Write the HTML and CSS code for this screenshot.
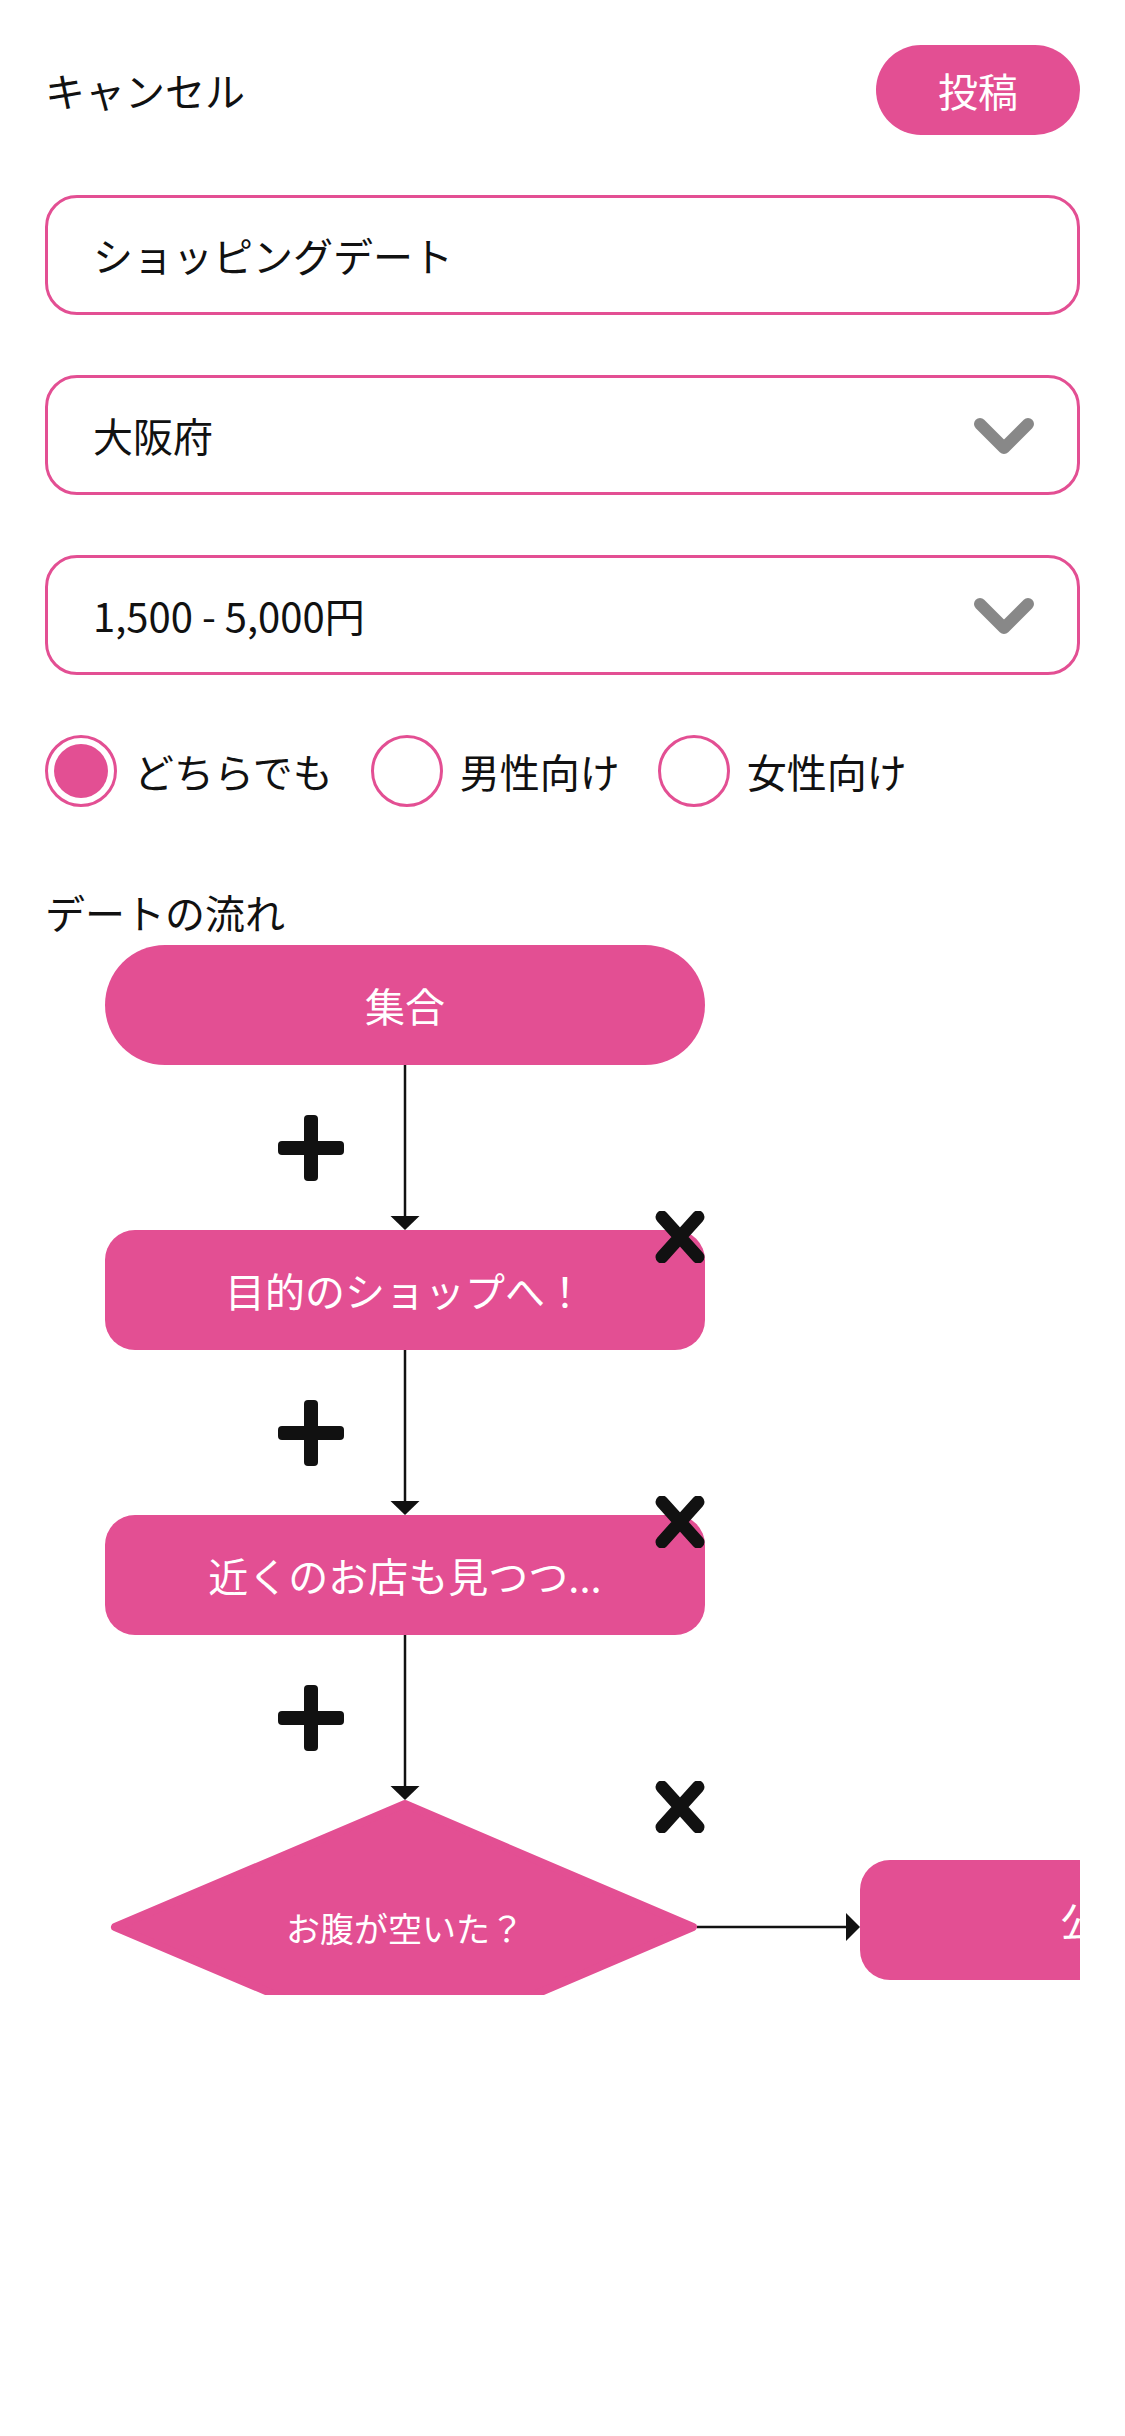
FILE: index.html
```html
<!DOCTYPE html>
<html lang="ja">
<head>
<meta charset="utf-8">
<title>投稿</title>
<link rel="stylesheet" href="styles.css">
</head>
<body>
<div class="page">
  <header class="topbar">
    <span class="cancel">キャンセル</span>
    <button class="post">投稿</button>
  </header>

  <div class="field"><span class="field-text">ショッピングデート</span></div>

  <div class="field select"><span class="field-text">大阪府</span>
    <svg class="chev" width="62" height="38" viewBox="0 0 62 38"><path d="M7 7 L31 31 L55 7" fill="none" stroke="#888" stroke-width="12" stroke-linecap="round" stroke-linejoin="round"/></svg>
  </div>

  <div class="field select"><span class="field-text">1,500 - 5,000円</span>
    <svg class="chev" width="62" height="38" viewBox="0 0 62 38"><path d="M7 7 L31 31 L55 7" fill="none" stroke="#888" stroke-width="12" stroke-linecap="round" stroke-linejoin="round"/></svg>
  </div>

  <div class="radios">
    <label class="radio"><span class="circle checked"><span class="dot"></span></span><span class="rlabel">どちらでも</span></label>
    <label class="radio"><span class="circle"></span><span class="rlabel">男性向け</span></label>
    <label class="radio"><span class="circle"></span><span class="rlabel">女性向け</span></label>
  </div>

  <div class="section-label">デートの流れ</div>

  <div class="flow">
    <svg class="wires" width="1200" height="1200" viewBox="0 0 1200 1200">
      <g stroke="#111" stroke-width="2.5" fill="none">
        <line x1="360" y1="120" x2="360" y2="275"/>
        <line x1="360" y1="405" x2="360" y2="560"/>
        <line x1="360" y1="690" x2="360" y2="845"/>
        <line x1="652" y1="982" x2="803" y2="982"/>
      </g>
      <g fill="#111">
        <polygon points="345.5,271 374.5,271 360,285"/>
        <polygon points="345.5,556 374.5,556 360,570"/>
        <polygon points="345.5,841 374.5,841 360,855"/>
        <polygon points="801,968 801,996 815,982"/>
      </g>
      <polygon class="diamond" points="360,859 648,982 360,1105 70,982"/>
    </svg>

    <div class="node pill n1">集合</div>
    <div class="node box n2">目的のショップへ！</div>
    <div class="node box n3">近くのお店も見つつ...</div>
    <div class="dtext">お腹が空いた？</div>
    <div class="node box n4">公園で休憩</div>

    <svg class="plus p1" width="66" height="66" viewBox="0 0 66 66"><rect x="26" y="0" width="14" height="66" rx="4" fill="#111"/><rect x="0" y="26" width="66" height="14" rx="4" fill="#111"/></svg>
    <svg class="plus p2" width="66" height="66" viewBox="0 0 66 66"><rect x="26" y="0" width="14" height="66" rx="4" fill="#111"/><rect x="0" y="26" width="66" height="14" rx="4" fill="#111"/></svg>
    <svg class="plus p3" width="66" height="66" viewBox="0 0 66 66"><rect x="26" y="0" width="14" height="66" rx="4" fill="#111"/><rect x="0" y="26" width="66" height="14" rx="4" fill="#111"/></svg>

    <svg class="cross x1" width="52" height="52" viewBox="0 0 52 52"><path d="M8 6 L44 46 M44 6 L8 46" stroke="#111" stroke-width="13" stroke-linecap="round"/></svg>
    <svg class="cross x2" width="52" height="52" viewBox="0 0 52 52"><path d="M8 6 L44 46 M44 6 L8 46" stroke="#111" stroke-width="13" stroke-linecap="round"/></svg>
    <svg class="cross x3" width="52" height="52" viewBox="0 0 52 52"><path d="M8 6 L44 46 M44 6 L8 46" stroke="#111" stroke-width="13" stroke-linecap="round"/></svg>
  </div>
</div>
</body>
</html>
```

FILE: styles.css
```css
* { box-sizing: border-box; }
html, body { margin: 0; padding: 0; background: #fff; }
body {
  font-family: "Noto Sans CJK JP", "Noto Sans", sans-serif;
  color: #111;
}
.page {
  width: 1125px;
  padding: 45px 45px 0 45px;
}
.topbar {
  display: flex;
  justify-content: space-between;
  align-items: center;
  height: 90px;
}
.cancel {
  font-size: 40px;
  line-height: 1;
}
.post {
  width: 204px;
  height: 90px;
  border: none;
  border-radius: 45px;
  background: #e34f93;
  color: #fff;
  font-family: inherit;
  font-size: 40px;
  padding: 0;
}
.field {
  margin-top: 60px;
  height: 120px;
  border: 3px solid #e34f93;
  border-radius: 32px;
  display: flex;
  align-items: center;
  justify-content: space-between;
  padding: 0 42px 0 45px;
}
.field-text {
  font-size: 40px;
  line-height: 1;
}
.chev { display: block; margin-top: 2px; }
.radios {
  margin-top: 60px;
  display: flex;
  align-items: center;
  gap: 38px;
  height: 72px;
}
.radio {
  display: flex;
  align-items: center;
  gap: 17px;
}
.circle {
  width: 72px;
  height: 72px;
  border: 3px solid #e34f93;
  border-radius: 50%;
  display: flex;
  align-items: center;
  justify-content: center;
}
.dot {
  width: 54px;
  height: 54px;
  border-radius: 50%;
  background: #e34f93;
}
.rlabel {
  font-size: 40px;
  line-height: 1;
}
.section-label {
  margin-top: 75px;
  margin-bottom: 3px;
  font-size: 40px;
  line-height: 60px;
  height: 60px;
}
.flow {
  position: relative;
  overflow: hidden;
  height: 1050px;
  width: 1035px;
}
.wires { position: absolute; left: 0; top: 0; }
.diamond {
  fill: #e34f93;
  stroke: #e34f93;
  stroke-width: 8;
  stroke-linejoin: round;
}
.node {
  position: absolute;
  width: 600px;
  height: 120px;
  background: #e34f93;
  color: #fff;
  font-size: 40px;
  display: flex;
  align-items: center;
  justify-content: center;
  white-space: nowrap;
}
.pill { border-radius: 60px; }
.box { border-radius: 30px; }
.n1 { left: 60px; top: 0; }
.n2 { left: 60px; top: 285px; }
.n3 { left: 60px; top: 570px; }
.n4 { left: 815px; top: 915px; }
.dtext {
  position: absolute;
  left: 160px;
  top: 952px;
  width: 400px;
  height: 60px;
  color: #fff;
  font-size: 34px;
  display: flex;
  align-items: center;
  justify-content: center;
}
.plus { position: absolute; left: 233px; }
.p1 { top: 170px; }
.p2 { top: 455px; }
.p3 { top: 740px; }
.cross { position: absolute; left: 609px; }
.x1 { top: 266px; }
.x2 { top: 551px; }
.x3 { top: 836px; }
```
